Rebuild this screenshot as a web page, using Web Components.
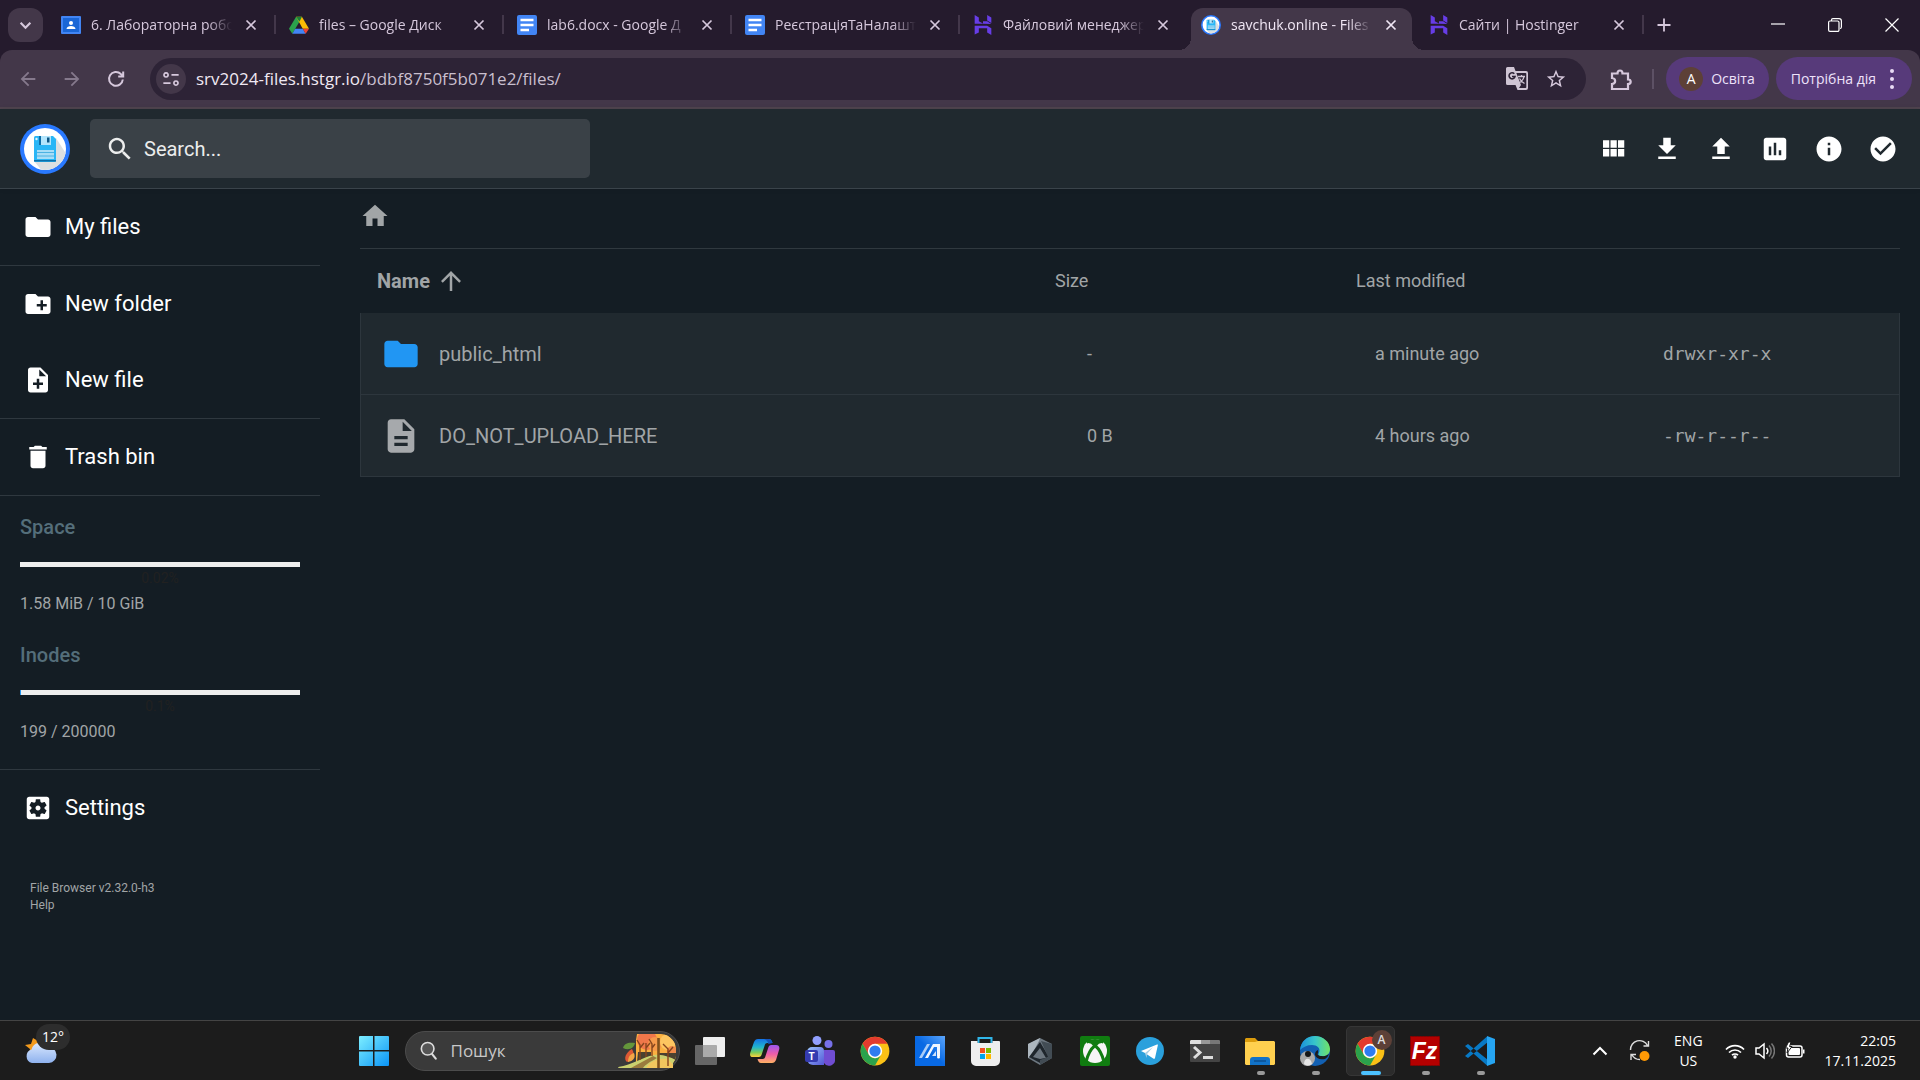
<!DOCTYPE html>
<html lang="uk">
<head>
<meta charset="utf-8">
<title>savchuk.online - Files</title>
<style>
  body {
    margin: 0;
    background: #141d24;
    --ui: "Open Sans", "Noto Sans", sans-serif;
    --app: Roboto, "Liberation Sans", sans-serif;
  }
</style>
</head>
<body>
<app-desktop></app-desktop>

<script>
// Material icons, all on a 24x24 grid
const PATHS = {
  folder: "M10 4H4c-1.1 0-1.99.9-1.99 2L2 18c0 1.1.9 2 2 2h16c1.1 0 2-.9 2-2V8c0-1.1-.9-2-2-2h-8l-2-2z",
  newFolder: "M20 6h-8l-2-2H4c-1.11 0-1.99.89-1.99 2L2 18c0 1.11.89 2 2 2h16c1.11 0 2-.89 2-2V8c0-1.11-.89-2-2-2zm-1 8h-3v3h-2v-3h-3v-2h3V9h2v3h3v2z",
  newFile: "M14 2H6c-1.1 0-1.99.9-1.99 2L4 20c0 1.1.89 2 1.99 2H18c1.1 0 2-.9 2-2V8l-6-6zm2 14h-3v3h-2v-3H8v-2h3v-3h2v3h3v2zm-3-7V3.5L18.5 9H13z",
  trash: "M6 19c0 1.1.9 2 2 2h8c1.1 0 2-.9 2-2V7H6v12zM19 4h-3.5l-1-1h-5l-1 1H5v2h14V4z",
  settings: "M12 10c-1.1 0-2 .9-2 2s.9 2 2 2 2-.9 2-2-.9-2-2-2zm7-7H5c-1.11 0-2 .9-2 2v14c0 1.1.89 2 2 2h14c1.11 0 2-.9 2-2V5c0-1.1-.89-2-2-2zm-1.75 9c0 .23-.02.46-.05.68l1.48 1.16c.13.11.17.3.08.45l-1.4 2.42c-.09.15-.27.21-.43.15l-1.74-.7c-.36.28-.76.51-1.18.69l-.26 1.85c-.03.17-.18.3-.35.3h-2.8c-.17 0-.32-.13-.35-.29l-.26-1.85c-.43-.18-.82-.41-1.18-.69l-1.74.7c-.16.06-.34 0-.43-.15l-1.4-2.42c-.09-.15-.05-.34.08-.45l1.48-1.16c-.03-.23-.05-.46-.05-.69 0-.23.02-.46.05-.68l-1.48-1.16c-.13-.11-.17-.3-.08-.45l1.4-2.42c.09-.15.27-.21.43-.15l1.74.7c.36-.28.76-.51 1.18-.69l.26-1.85c.03-.17.18-.3.35-.3h2.8c.17 0 .32.13.35.29l.26 1.85c.43.18.82.41 1.18.69l1.74-.7c.16-.06.34 0 .43.15l1.4 2.42c.09.15.05.34-.08.45l-1.48 1.16c.03.23.05.46.05.69z",
  search: "M15.5 14h-.79l-.28-.27C15.41 12.59 16 11.11 16 9.5 16 5.91 13.09 3 9.5 3S3 5.91 3 9.5 5.91 16 9.5 16c1.61 0 3.09-.59 4.23-1.57l.27.28v.79l5 4.99L20.49 19l-4.99-5zm-6 0C7.01 14 5 11.99 5 9.5S7.01 5 9.5 5 14 7.01 14 9.5 11.99 14 9.5 14z",
  grid: "M4 11h5V5H4v6zm0 7h5v-6H4v6zm6 0h5v-6h-5v6zm6 0h5v-6h-5v6zm-6-7h5V5h-5v6zm6-6v6h5V5h-5z",
  download: "M19 9h-4V3H9v6H5l7 7 7-7zM5 18v2h14v-2H5z",
  upload: "M9 16h6v-6h4l-7-7-7 7h4zm-4 2h14v2H5z",
  chart: "M19 3H5c-1.1 0-2 .9-2 2v14c0 1.1.9 2 2 2h14c1.1 0 2-.9 2-2V5c0-1.1-.9-2-2-2zM9 17H7v-7h2v7zm4 0h-2V7h2v10zm4 0h-2v-4h2v4z",
  info: "M12 2C6.48 2 2 6.48 2 12s4.48 10 10 10 10-4.48 10-10S17.52 2 12 2zm1 15h-2v-6h2v6zm0-8h-2V7h2v2z",
  check: "M12 2C6.48 2 2 6.48 2 12s4.48 10 10 10 10-4.48 10-10S17.52 2 12 2zm-2 15l-5-5 1.41-1.41L10 14.17l7.59-7.59L19 8l-9 9z",
  home: "M10 20v-6h4v6h5v-8h3L12 3 2 12h3v8z",
  arrowUp: "M4 12l1.41 1.41L11 7.83V20h2V7.83l5.58 5.59L20 12l-8-8-8 8z",
  doc: "M14 2H6c-1.1 0-1.99.9-1.99 2L4 20c0 1.1.89 2 1.99 2H18c1.1 0 2-.9 2-2V8l-6-6zm2 16H8v-2h8v2zm0-4H8v-2h8v2zm-3-5V3.5L18.5 9H13z",
  star: "M22 9.24l-7.19-.62L12 2 9.19 8.63 2 9.24l5.46 4.73L5.82 21 12 17.27 18.18 21l-1.63-7.03L22 9.24zM12 15.4l-3.76 2.27 1-4.28-3.32-2.88 4.38-.38L12 6.1l1.71 4.04 4.38.38-3.32 2.88 1 4.28L12 15.4z",
  back: "M20 11H7.83l5.59-5.59L12 4l-8 8 8 8 1.41-1.41L7.83 13H20v-2z",
  forward: "M12 4l-1.41 1.41L16.17 11H4v2h12.17l-5.58 5.59L12 20l8-8z"
};

// Stroked line icons
const LINES = {
  close: ["0 0 12 12", 1.7, "M1.5 1.5l9 9M10.500 1.500l-9 9"],
  chevron: ["0 0 12 12", 2, "M1.500 3.500L6 8l4.500-4.500"],
  plus: ["0 0 14 14", 1.8, "M7 .5v13M.5 7h13"],
  min: ["0 0 14 14", 1.2, "M0 6h14"],
  restore: ["0 0 14 14", 1.2, "M3.500 2.500V2a1.400 1.400 0 0 1 1.400-1.400H11a2.400 2.400 0 0 1 2.400 2.400v6A1.500 1.500 0 0 1 12 10.500M2 3h7.500A1.400 1.400 0 0 1 11 4.400V12a1.400 1.400 0 0 1-1.400 1.400H2A1.400 1.400 0 0 1 .6 12V4.400A1.400 1.400 0 0 1 2 3z"],
  exit: ["0 0 14 14", 1.2, "M.5.5l13 13M13.500.5l-13 13"],
  reload: ["0 0 20 20", 2, "M16.800 10.500A6.900 6.900 0 1 1 14.800 5L17 7M17.200 2.500v5h-5"],
  tune: ["0 0 20 20", 1.9, "M4.500 3.200a2.300 2.300 0 1 0 .01 0M10.500 5.500h8M15.500 12.200a2.300 2.300 0 1 0 .01 0M1.500 14.500h8"],
  puzzle: ["0 0 24 24", 2.2, "M3 6.500h5.500c0-4 5-4 5 0H19v6c3.600 0 3.600 4.500 0 4.500v5H3v-5c4.200-.4 4.200-5.600 0-6z"],
  up: ["0 0 16 16", 2, "M1.500 11.500L8 5l6.500 6.500"]
};

const HOSTINGER = `<path fill="#673de6" d="M2 0v10.500l10.500.1L7 7.500V3zM17 0v6.500l5 3V3zM2 23.500V13l15-.1 5 3.100V24l-5-3v-5H7v5z"/><path fill="#673de6" d="M12 10.600l10 .1-5-3.200h-5z"/>`;

const CHROME = `
  <circle cx="24" cy="24" r="23" fill="#fbc116"/>
  <path fill="#e33b2e" d="M4.100 12.500A23 23 0 0 1 43.900 12.500H24L14 29.800z"/>
  <path fill="#2ba24c" d="M4.100 12.500A23 23 0 0 0 24 47l10-17.300A11.500 11.500 0 0 1 14 29.700z"/>
  <circle cx="24" cy="24" r="11.500" fill="#fff"/><circle cx="24" cy="24" r="9" fill="#2f7cf0"/>`;

const LOGO = `
  <circle cx="25" cy="25" r="25" fill="#2979ff"/><circle cx="25" cy="25" r="21" fill="#fff"/>
  <path fill="#dcdfe1" d="M36 14l9.600 15A21 21 0 0 1 21 45.600L14 37z"/>
  <path fill="#29b6f6" d="M14 13.500a1.500 1.500 0 0 1 1.500-1.500H33l3 3v21.500a1.500 1.500 0 0 1-1.500 1.500h-19a1.500 1.500 0 0 1-1.500-1.500z"/>
  <path fill="#0d6ea8" d="M19 12h2v9h-2zM14 36h22v1.500H14z"/><path fill="#b3e5fc" d="M21 12h10v9H21z"/>
  <path fill="#0b5686" d="M27 13.500h2.500v5H27z"/><path fill="#a7ddf7" d="M17 26h17v9H17z"/>
  <path stroke="#4cb2e2" d="M17 28.500h17M17 32h17"/><circle cx="16.500" cy="15" r="1.200" fill="#e1f5fe"/>`;

const GDOC = `<rect width="20" height="20" rx="2" fill="#4285f4"/><path stroke="#fff" stroke-width="2.400" d="M3.500 5h13M3.500 10h13M3.500 15h8.500"/>`;

// Full-colour art: [viewBox, markup]
const ART = {
  logo: ["0 0 50 50", LOGO],
  gdoc: ["0 0 20 20", GDOC],
  hostinger: ["0 0 24 24", HOSTINGER],
  chrome: ["0 0 48 48", CHROME],
  classroom: ["0 0 20 20", `<rect y="1" width="20" height="18" rx="1" fill="#4285f4"/><rect x="2" y="3" width="16" height="14" fill="#1a66d6"/><circle cx="10" cy="8" r="2" fill="#fff"/><path fill="#fff" d="M5.500 14c0-4 9-4 9 0z"/>`],
  drive: ["0 0 24 22", `<path fill="#2ba24c" d="M8.500 1L0 15.500 4 21.500 12.500 7z"/><path fill="#fbbc04" d="M8.500 1h7L24 15.500h-7.500z"/><path fill="#4285f4" d="M4 21.500h16l-3.500-6h-9z"/><path fill="#ea4335" d="M16.500 15.500H24l-4 6z"/><path fill="#188038" d="M8.500 1h7l-3 6z"/>`],
  translate: ["0 0 22 24", `<path fill="#cfc5d4" d="M1.500 0H8l1.500 4H20a2 2 0 0 1 2 2v15a2 2 0 0 1-2 2h-8.500l-2-5h-8A1.500 1.500 0 0 1 0 16.500v-15A1.500 1.500 0 0 1 1.500 0z"/><path fill="#2d2336" d="M10.300 6H19.500a.8.8 0 0 1 .8.800v13.400a.8.800 0 0 1-.8.800H13l2-3z"/><path stroke="#cfc5d4" stroke-width="1.300" fill="none" d="M12 9.500h7M15.500 8v1.500M18 9.500c-.5 3-2.500 5-5 6.500M13.500 11.500c1 2 2.500 3.500 5 5"/><path stroke="#2d2336" stroke-width="1.600" fill="none" d="M8.300 6.800a3 3 0 1 0 .7 2.700H6"/>`],
  dots: ["0 0 6 22", `<g fill="#e9dcf5"><circle cx="3" cy="3" r="2"/><circle cx="3" cy="11" r="2"/><circle cx="3" cy="19" r="2"/></g>`],
  start: ["0 0 30 30", `<linearGradient id="g" x2="1" y2="1" gradientUnits="objectBoundingBox"><stop stop-color="#7deeff"/><stop offset="1" stop-color="#0a94f7"/></linearGradient><path fill="url(#g)" d="M1 0h13v14H0V1a1 1 0 0 1 1-1zM15.500 0H29a1 1 0 0 1 1 1v13H15.500zM0 15.500h14V30H1a1 1 0 0 1-1-1zM15.500 15.500H30V29a1 1 0 0 1-1 1H15.500z"/>`],
  weather: ["0 0 32 28", `<path fill="#f39a1c" d="M0 9l6-1 2-6 5 3 6 0v10L4 18l1-5z"/><linearGradient id="g" x2="0" y2="1"><stop stop-color="#dbe9ff"/><stop offset="1" stop-color="#8fb2ee"/></linearGradient><path fill="url(#g)" d="M7 27a7 7 0 0 1-.5-13.500A9 9 0 0 1 23 11a8 8 0 0 1 1 16z"/>`],
  autumn: ["0 0 58 34", `
    <clipPath id="c"><path d="M0 34l7-13 10-9 2-12h24a16 16 0 0 1 15 17 16 16 0 0 1-3 12v5z"/></clipPath>
    <g clip-path="url(#c)"><path fill="#fbb040" d="M18 0h40v34H18z"/><circle cx="29" cy="6" r="10" fill="#f0774a"/><circle cx="37" cy="10" r="7" fill="#f79a4b"/><circle cx="50" cy="8" r="8" fill="#fdc560"/><circle cx="54" cy="17" r="5" fill="#f08a4a"/>
    <path fill="#4a4130" d="M20 18h13v6l-14 4zM41 19h17v7H41z"/>
    <path fill="#cad06f" d="M0 33c15-2 24-10 36-12 10-1 17 3 22 5v8H0z"/><path fill="#9a7b3d" d="M13 34c7-4 15-8 22-12l4 2c-7 4-11 6-14 10z"/><path fill="#f2c65e" d="M28 34c4-7 12-10 22-9l8 9z"/>
    <path stroke="#87451e" stroke-width="1.400" fill="none" d="M22 26V11l-3-5M22 14l4-5M28 23V9M28 14l4-5M34 22V10l-3-5M34 14l3-4M50 32V15l-5-5M50 19l5-6"/><path stroke="#80511c" stroke-width="2.600" d="M40.500 34V4"/></g>
    <path fill="#64963b" d="M5 14c1-5 6-6 12-5-1 5-6 8-12 5z"/><path fill="#de5934" d="M9 28c-4-3-1-10 5-13 3 5 2 11-5 13z"/><path fill="#f3a746" d="M10 28c0-5 2-8 6-9 2 5-1 8-6 9z"/>`],
  taskview: ["0 0 30 30", `<path fill="#eee" d="M9 1h20a1 1 0 0 1 1 1v18a1 1 0 0 1-1 1H8V2a1 1 0 0 1 1-1z"/><path fill="#666" d="M1 9h7v12h14v7a1 1 0 0 1-1 1H1a1 1 0 0 1-1-1V10a1 1 0 0 1 1-1z"/><path fill="#aaa" d="M8 9h13a1 1 0 0 1 1 1v11H8z"/>`],
  copilot: ["0 0 30 30", `<linearGradient id="a" x2="0" y2="1"><stop stop-color="#1473e6"/><stop offset=".45" stop-color="#20b5cf"/><stop offset=".75" stop-color="#7dcb59"/><stop offset="1" stop-color="#ffd03c"/></linearGradient><linearGradient id="b" x2="0" y2="1"><stop stop-color="#9b57f0"/><stop offset=".5" stop-color="#ee5ca8"/><stop offset="1" stop-color="#ffb163"/></linearGradient>
    <path fill="url(#a)" d="M8 3h11c2 0 3 2 3.500 4h-5c-2 0-2.500 1-3 3l-3 9c-1 2-2 2-4 2H3c-3 0-3.500-2-2.500-5L4 6c1-2 2-3 4-3z"/><path fill="url(#b)" d="M22 27H11c-2 0-3-2-3.500-4h5c2 0 2.500-1 3-3l3-9c1-2 2-2 4-2H26c3 0 4 2 3 5l-3 10c-1 2-2 3-4 3z"/><path fill="#1555bd" d="M14 3h5c2 0 3 2 3.500 4l-4 1c-1-3-2-4-4.500-5z"/>`],
  teams: ["0 0 30 30", `<linearGradient id="g" x2="1" y2="1"><stop stop-color="#9bc5ff"/><stop offset="1" stop-color="#5457d6"/></linearGradient><circle cx="12" cy="4.500" r="4.500" fill="#92a0ff"/><circle cx="23.500" cy="8" r="4" fill="#7770e9"/><path fill="#704dd2" d="M19 14h9a2 2 0 0 1 2 2v7a6 6 0 0 1-11 4z"/><path fill="url(#g)" d="M7 11h8a4 4 0 0 1 4 4v14H8a6 6 0 0 1-6-6v-7a5 5 0 0 1 5-5z"/><rect y="14" width="13" height="12" rx="2" fill="#353bb0"/><text x="6.500" y="23.500" text-anchor="middle" font-size="10" font-weight="700" fill="#fff">T</text>`],
  myasus: ["0 0 30 30", `<linearGradient id="g" y1="1" x2="1" y2="0"><stop offset=".5" stop-color="#0869e4"/><stop offset="1" stop-color="#5ba5fb"/></linearGradient><path fill="url(#g)" d="M0 0h30v30H0z"/><path fill="#a9cdf8" d="M4 22L12 8h3L7 22z"/><path fill="#f0f7ff" d="M10 22l8-14h7v12h-3v-9l-3 0-6 11z"/><path fill="#cfe3fb" d="M17 20l4-5v5z"/><circle cx="23.500" cy="21" r="1.500" fill="#fff"/>`],
  store: ["0 0 30 30", `<path fill="none" stroke="#30b6e9" stroke-width="2" d="M8.500 8V2h13v6"/><path fill="#eee" d="M1 5h6.500v2h15V5H29a1 1 0 0 1 1 1v19a5 5 0 0 1-5 5H6a5 5 0 0 1-5-5z"/><path fill="#f25022" d="M10 12h5v5h-5z"/><path fill="#7fba00" d="M16 12h5v5h-5z"/><path fill="#00a4ef" d="M10 18h5v5h-5z"/><path fill="#ffb900" d="M16 18h5v5h-5z"/>`],
  armoury: ["0 0 30 30", `<path fill="#6d7780" d="M15 2l12 6v14l-12 7L3 22V8z"/><path fill="#adb7bf" d="M15 2L3 8v14l3-2L14 5z"/><path fill="#1f262c" d="M15 6l9 15-3 1-6-10-7 9 7 2 5-1v2l-5 3-11-6z"/><path fill="#424c54" d="M27 8v14l-12 7v-5l8-3-7-16z"/>`],
  xbox: ["0 0 30 30", `<rect width="30" height="30" rx="2" fill="#107c10"/><circle cx="15" cy="15" r="12" fill="#f5f5f5"/><path fill="#107c10" d="M6 6c3-1 6 .5 9 3 3-2.500 6-4 9-3-2-2-5-3-9-3S8 4 6 6z"/><path fill="none" stroke="#107c10" stroke-width="3" d="M6 26C8 17 12 12 15 9.500 18 12 22 17 24 26M15 9.500C12 6 9 5 6.500 6M15 9.500C18 6 21 5 23.500 6"/>`],
  telegram: ["0 0 30 30", `<circle cx="15" cy="15" r="14" fill="#2aa0dc"/><path fill="#fff" d="M6 15l16-6.500c1-.3 1 .2.800 1L20 22c-.3 1-1 1-1.800.5L10 17z"/><path fill="#a9cfe3" d="M10 17l8-6-6 7-.5 4z"/>`],
  terminal: ["0 0 30 30", `<rect y="4" width="30" height="22" rx="1" fill="#444"/><path fill="#ddd" d="M1 4h10v4H0V5z"/><path fill="#999" d="M11 4h9v4h-9z"/><path fill="#777" d="M20 4h9l1 1v3H20z"/><path fill="none" stroke="#ddd" stroke-width="3" d="M4 11l6 5.500L4 22M13 21.500h10"/>`],
  explorer: ["0 0 30 30", `<path fill="#dc9c0c" d="M1 2h9l3 3h8v5H0V3z"/><path fill="#ffd04f" d="M0 6h10l3-1h16l1 1v22l-1 1H1l-1-1z"/><path fill="#1172c8" d="M5 29v-5a3 3 0 0 1 3-3h14a3 3 0 0 1 3 3v5z"/><path stroke="#0b4f91" stroke-width="1.500" d="M9 25h12"/>`],
  edge: ["0 0 30 30", `<linearGradient id="g" x2="1"><stop stop-color="#1b91dc"/><stop offset=".5" stop-color="#37c6ca"/><stop offset="1" stop-color="#71e366"/></linearGradient><circle cx="15" cy="15" r="15" fill="#1260b2"/><path fill="url(#g)" d="M0 14C1 5 7 0 15 0s15 6 15 13c0 5-4 8-9 7-3-.5-3-2-2-3 2-5-2-8-7-8S3 11 0 14z"/><path fill="#1c1c1c" d="M18 17c-1 1 0 3 3 3 4 .5 6-.5 8-2-1 2-2 4-4 5-6 1-9-1-10-4 0-3 1-4 3-5z"/><circle cx="7.500" cy="22.500" r="7.500" fill="#aaa"/><circle cx="8" cy="18" r="3" fill="#161616"/><path fill="#e5e5e5" d="M4 28c0-7 7-7 8 0-3 2-5 2-8 0z"/>`],
  filezilla: ["0 0 30 30", `<rect x=".5" y=".5" width="29" height="29" fill="#b40000" stroke="#8b0000" stroke-dasharray="2 1"/><text x="14.500" y="23" text-anchor="middle" font-size="23" font-weight="700" font-style="italic" fill="#fff">Fz</text>`],
  vscode: ["0 0 30 30", `<path fill="#0879c5" d="M0 10l3-2 20 16-1 5.500zM0 20l3 2L23 6 22 .5z"/><path fill="#26a5f2" d="M22 0l8 3v24l-8 3z"/>`],
  sync: ["0 0 22 24", `<path fill="none" stroke="#ddd" stroke-width="1.400" d="M1.500 11a9 9 0 0 1 17-4.500M19.500 2v5h-5M11 20.500A9 9 0 0 1 3 16M2 21v-5.500h5"/><circle cx="15.500" cy="17" r="5" fill="#ff9a05"/>`],
  wifi: ["0 0 20 16", `<path fill="none" stroke="#fff" stroke-width="1.700" d="M1 6.500a12.600 12.600 0 0 1 18 0M4 9.500a8.500 8.500 0 0 1 12 0M7 12.200a4.300 4.300 0 0 1 6 0"/><circle cx="10" cy="14" r="1.700" fill="#fff"/>`],
  volume: ["0 0 20 18", `<path fill="none" stroke="#fff" stroke-width="1.500" d="M1 6h3l5-4v14l-5-4H1zM11.500 6a4.500 4.500 0 0 1 0 6"/><path fill="none" stroke="#777" stroke-width="1.500" d="M14 3.500a8 8 0 0 1 0 11M16.500 1.500a11 11 0 0 1 0 15"/>`],
  battery: ["0 0 20 18", `<rect x="1.500" y="4" width="15.500" height="11" rx="2" fill="none" stroke="#fff" stroke-width="1.500"/><rect x="3.500" y="6" width="11.500" height="7" rx="1" fill="#fff"/><path fill="#fff" d="M18 7.500h1.500v4H18z"/><path fill="#fff" stroke="#1c1c1c" d="M3.500 0L.5 6h2.500l-1 5L7 4.500H4.500L6 0z"/>`],
  taskSearch: ["0 0 20 22", `<circle cx="8.500" cy="8.500" r="7" fill="#555" stroke="#ddd" stroke-width="1.800"/><path stroke="#ddd" stroke-width="2.400" stroke-linecap="round" d="M13.500 14.500l4 5"/>`]
};

function render(host, html) {
  const template = document.createElement("template");
  template.innerHTML = html;
  host.attachShadow({ mode: "open" }).appendChild(template.content.cloneNode(true));
}

class UiIcon extends HTMLElement {
  connectedCallback() {
    if (this.shadowRoot) return;
    const name = this.getAttribute("name");
    const w = this.getAttribute("size") || 24;
    const h = this.getAttribute("height") || w;
    let box = "0 0 24 24", body, attrs = 'fill="currentColor"';

    if (PATHS[name]) {
      body = `<path d="${PATHS[name]}"/>`;
    } else if (LINES[name]) {
      box = LINES[name][0];
      attrs = `fill="none" stroke="currentColor" stroke-width="${LINES[name][1]}"`;
      body = `<path d="${LINES[name][2]}"/>`;
    } else {
      [box, body] = ART[name];
      attrs = "";
    }
    render(this, `
      <style>
        :host { display: inline-flex; flex: none; }
        svg { display: block; font-family: "Liberation Sans", sans-serif; }
      </style>
      <svg width="${w}" height="${h}" viewBox="${box}" ${attrs} aria-hidden="true">${body}</svg>`);
  }
}
customElements.define("ui-icon", UiIcon);


class BrowserTab extends HTMLElement {
  constructor() {
    super();
    render(this, `
      <style>
        :host {
          display: block;
          flex: 0 1 228px;
          min-width: 0;
          box-sizing: border-box;
          padding: 8px 4px 0 3px;
          position: relative;
          color: #d6c8dc;
        }
        .tab {
          height: 42px;
          box-sizing: border-box;
          display: flex;
          align-items: center;
          padding: 0 13px 8px 10px;
          border-radius: 12px 12px 0 0;
        }
        .title {
          flex: 1;
          min-width: 0;
          margin: 0 11px 0 10px;
          overflow: hidden;
          white-space: nowrap;
          line-height: 24px;
          mask-image: linear-gradient(to right, #000 calc(100% - 24px), transparent);
        }
        button {
          all: unset;
          display: flex;
          padding: 2px;
        }
        /* divider on the right edge */
        :host::after {
          content: "";
          position: absolute;
          right: 0;
          top: 15px;
          width: 2px;
          height: 19px;
          background: #43374a;
        }
        :host([nodivider])::after, :host([active])::after { display: none; }
        :host([active]) { color: #f0e6f4; }
        :host([active]) .tab { background: #433749; position: relative; }
        :host([active]) .tab::before, :host([active]) .tab::after {
          content: "";
          position: absolute;
          bottom: 0;
          width: 12px;
          height: 12px;
        }
        :host([active]) .tab::before {
          left: -12px;
          background: radial-gradient(circle at 0 0, transparent 12px, #433749 12px);
        }
        :host([active]) .tab::after {
          right: -12px;
          background: radial-gradient(circle at 100% 0, transparent 12px, #433749 12px);
        }
      </style>
      <div class="tab">
        <slot name="icon"></slot>
        <span class="title"><slot></slot></span>
        <button aria-label="Закрити"><ui-icon name="close" size="12"></ui-icon></button>
      </div>`);
  }
}
customElements.define("browser-tab", BrowserTab);


class BrowserChrome extends HTMLElement {
  constructor() {
    super();
    render(this, `
      <style>
        :host {
          display: block;
          background: #251b2d;
          font: 14px/20px var(--ui);
          color: #d6c8dc;
        }
        button, a { all: unset; display: flex; align-items: center; justify-content: center; }
        .strip { display: flex; height: 50px; align-items: flex-start; }
        .tabsearch {
          width: 35px;
          height: 34px;
          margin: 8px 5px 0 8px;
          border-radius: 12px;
          background: #433749;
        }
        .tabs { display: flex; flex: 0 1 1596px; min-width: 0; }
        .new { width: 40px; height: 50px; }
        .window { display: flex; margin-left: auto; color: #fff; }
        .window button { width: 57px; height: 50px; }
        .bar {
          display: flex;
          align-items: center;
          height: 57px;
          background: #433749;
          border-radius: 12px 12px 0 0;
          border-bottom: 2px solid #50444f;
          padding: 0 8px 0 6px;
        }
        .nav { width: 44px; height: 40px; }
        .nav.off { color: #85798c; }
        .omnibox {
          flex: 1;
          display: flex;
          align-items: center;
          height: 42px;
          margin-left: 12px;
          border-radius: 21px;
          background: #2d2336;
          padding: 0 19px 0 6px;
        }
        .site { width: 30px; height: 30px; border-radius: 15px; background: #433749; }
        .url {
          flex: 1;
          margin-left: 10px;
          font-size: 17px;
          line-height: 24px;
          color: #c9bfce;
          outline: none;
        }
        .url b { font-weight: 400; color: #f0e9f3; }
        .omnibox > button + button { margin-left: 17px; }
        .ext { margin: 0 19px 0 23px; }
        .sep { width: 2px; height: 20px; background: #5d5165; }
        .pill {
          height: 43px;
          box-sizing: border-box;
          border-radius: 22px;
          background: #573a7a;
          color: #eee2fa;
        }
        .profile { margin: 0 7px 0 12px; padding: 0 14px 0 13px; }
        .avatar {
          width: 24px;
          line-height: 24px;
          border-radius: 12px;
          background: #5d4037;
          color: #fff;
          text-align: center;
          margin-right: 8px;
        }
        .action { padding: 0 17px 0 15px; }
        .action ui-icon { margin-left: 13px; }
      </style>
      <div class="strip">
        <button class="tabsearch" aria-label="Пошук вкладок"><ui-icon name="chevron" size="13"></ui-icon></button>
        <div class="tabs">
          <browser-tab><ui-icon slot="icon" name="classroom" size="20"></ui-icon>6. Лабораторна робо</browser-tab>
          <browser-tab><ui-icon slot="icon" name="drive" size="20"></ui-icon>files – Google Диск</browser-tab>
          <browser-tab><ui-icon slot="icon" name="gdoc" size="20"></ui-icon>lab6.docx - Google Д</browser-tab>
          <browser-tab><ui-icon slot="icon" name="gdoc" size="20"></ui-icon>РеєстраціяТаНалашт</browser-tab>
          <browser-tab nodivider><ui-icon slot="icon" name="hostinger" size="20"></ui-icon>Файловий менеджер</browser-tab>
          <browser-tab active><ui-icon slot="icon" name="logo" size="20"></ui-icon>savchuk.online - Files</browser-tab>
          <browser-tab><ui-icon slot="icon" name="hostinger" size="20"></ui-icon>Сайти | Hostinger</browser-tab>
        </div>
        <button class="new" aria-label="Нова вкладка"><ui-icon name="plus" size="14"></ui-icon></button>
        <div class="window">
          <button aria-label="Згорнути"><ui-icon name="min" size="14"></ui-icon></button>
          <button aria-label="Відновити"><ui-icon name="restore" size="14"></ui-icon></button>
          <button aria-label="Закрити вікно"><ui-icon name="exit" size="14"></ui-icon></button>
        </div>
      </div>
      <div class="bar">
        <button class="nav off" aria-label="Назад"><ui-icon name="back" size="22"></ui-icon></button>
        <button class="nav off" aria-label="Вперед"><ui-icon name="forward" size="22"></ui-icon></button>
        <button class="nav" aria-label="Оновити"><ui-icon name="reload" size="20"></ui-icon></button>
        <div class="omnibox">
          <button class="site" aria-label="Про сайт"><ui-icon name="tune" size="18"></ui-icon></button>
          <div class="url" role="textbox" aria-label="Адреса" contenteditable="true" spellcheck="false"><b>srv2024-files.hstgr.io</b>/bdbf8750f5b071e2/files/</div>
          <button aria-label="Перекласти"><ui-icon name="translate" size="22" height="24"></ui-icon></button>
          <button aria-label="Закладка"><ui-icon name="star" size="22"></ui-icon></button>
        </div>
        <button class="ext" aria-label="Розширення"><ui-icon name="puzzle" size="24"></ui-icon></button>
        <span class="sep"></span>
        <button class="pill profile"><span class="avatar">A</span>Освіта</button>
        <button class="pill action">Потрібна дія<ui-icon name="dots" size="6" height="22"></ui-icon></button>
      </div>`);
  }
}
customElements.define("browser-chrome", BrowserChrome);


class FileHeader extends HTMLElement {
  constructor() {
    super();
    render(this, `
      <style>
        :host {
          display: flex;
          align-items: center;
          height: 79px;
          padding: 0 10px 0 20px;
          background: #20292f;
          border-bottom: 1px solid #3a434a;
          box-shadow: 0 0 5px rgba(0, 0, 0, .1);
          color: #fff;
        }
        label {
          display: flex;
          align-items: center;
          flex: 0 1 500px;
          box-sizing: border-box;
          height: 59px;
          margin: 0 auto 0 20px;
          padding: 0 15px;
          background: #3a4147;
          border-radius: 5px;
          color: #eceded;
        }
        input {
          all: unset;
          flex: 1;
          margin-left: 9px;
          font: 20px/24px var(--app);
        }
        input::placeholder { color: #eceded; opacity: 1; }
        button { all: unset; display: flex; padding: 12px; }
      </style>
      <ui-icon name="logo" size="50"></ui-icon>
      <label><ui-icon name="search" size="30"></ui-icon>
        <input type="text" aria-label="Search" placeholder="Search..."></label>
      <button aria-label="Switch view"><ui-icon name="grid" size="30"></ui-icon></button>
      <button aria-label="Download"><ui-icon name="download" size="30"></ui-icon></button>
      <button aria-label="Upload"><ui-icon name="upload" size="30"></ui-icon></button>
      <button aria-label="Usage"><ui-icon name="chart" size="30"></ui-icon></button>
      <button aria-label="Info"><ui-icon name="info" size="30"></ui-icon></button>
      <button aria-label="Select multiple"><ui-icon name="check" size="30"></ui-icon></button>`);
  }
}
customElements.define("file-header", FileHeader);


class UsageMeter extends HTMLElement {
  connectedCallback() {
    if (this.shadowRoot) return;
    const value = this.getAttribute("value");
    render(this, `
      <style>
        :host { display: block; font: 16px/24px var(--app); color: #a1a5a7; }
        .label { font-size: 20px; font-weight: 500; color: #546e7a; margin-bottom: 23px; }
        .track { height: 5px; background: #eee; }
        .fill { height: 5px; width: ${value}%; min-width: 0; background: #2196f3; }
        .pct { font-size: 14px; line-height: 20px; text-align: center; color: #212121; margin: 1px 0 4px; }
      </style>
      <div class="label">${this.getAttribute("label")}</div>
      <div class="track"><div class="fill"></div></div>
      <div class="pct">${value}%</div>
      <slot></slot>`);
  }
}
customElements.define("usage-meter", UsageMeter);


class FileSidebar extends HTMLElement {
  constructor() {
    super();
    render(this, `
      <style>
        :host { display: block; flex: 0 0 320px; color: #fff; }
        section { border-bottom: 1px solid #2f383f; }
        section:last-of-type { border: 0; }
        button {
          all: unset;
          display: flex;
          align-items: center;
          gap: 12px;
          height: 76px;
          padding-left: 23px;
          font: 22px/28px var(--app);
        }
        .usage { display: grid; gap: 27px; padding: 19px 20px 25px; }
        footer {
          margin: 34px 30px;
          font: 12px/17px var(--app);
          color: #a1a5a7;
        }
        a { display: block; color: inherit; text-decoration: none; }
      </style>
      <section><button><ui-icon name="folder" size="30"></ui-icon>My files</button></section>
      <section>
        <button><ui-icon name="newFolder" size="30"></ui-icon>New folder</button>
        <button><ui-icon name="newFile" size="30"></ui-icon>New file</button>
      </section>
      <section><button><ui-icon name="trash" size="30"></ui-icon>Trash bin</button></section>
      <section class="usage">
        <usage-meter label="Space" value="0.02">1.58 MiB / 10 GiB</usage-meter>
        <usage-meter label="Inodes" value="0.1">199 / 200000</usage-meter>
      </section>
      <section><button><ui-icon name="settings" size="30"></ui-icon>Settings</button></section>
      <footer>
        <a href="#">File Browser v2.32.0-h3</a>
        <a href="#">Help</a>
      </footer>`);
  }
}
customElements.define("file-sidebar", FileSidebar);


class FileListing extends HTMLElement {
  constructor() {
    super();
    this.files = [
      { icon: "folder", color: "#2196f3", name: "public_html", size: "-", modified: "a minute ago", perms: "drwxr-xr-x" },
      { icon: "doc", color: "#a6a9ac", name: "DO_NOT_UPLOAD_HERE", size: "0 B", modified: "4 hours ago", perms: "-rw-r--r--" }
    ];
    const rows = this.files.map((f) => `
      <tr>
        <td class="name"><div><ui-icon name="${f.icon}" size="40" style="color:${f.color}"></ui-icon>${f.name}</div></td>
        <td class="size">${f.size}</td>
        <td>${f.modified}</td>
        <td class="perms">${f.perms}</td>
      </tr>`).join("");

    render(this, `
      <style>
        :host {
          display: block;
          flex: 1;
          min-width: 0;
          padding: 0 20px 0 40px;
          font: 18px/24px var(--app);
          color: #a1a5a7;
        }
        .crumbs { padding: 12px 0 17px; border-bottom: 1px solid #30393f; }
        .crumbs a { display: inline-flex; vertical-align: top; color: inherit; }
        table { width: 100%; border-collapse: separate; border-spacing: 0; table-layout: fixed; }
        th { height: 64px; padding: 0; text-align: left; font-weight: 400; }
        th:first-child { padding-left: 17px; font-weight: 700; font-size: 20px; }
        th div, .name div { display: flex; align-items: center; }
        th ui-icon { margin-left: 6px; }
        td {
          height: 82px;
          box-sizing: border-box;
          padding: 0 0 0 19px;
          background: #20292f;
          border-bottom: 1px solid #2d363d;
        }
        td:first-child { border-left: 1px solid #2d363d; }
        td:last-child { border-right: 1px solid #2d363d; }
        td.name { padding-left: 20px; font-size: 20px; }
        .name ui-icon { margin-right: 18px; }
        td.size { padding-left: 32px; }
        .perms { font: 18px/24px "DejaVu Sans Mono", monospace; }
      </style>
      <div class="crumbs"><a href="#" aria-label="Home"><ui-icon name="home" size="30"></ui-icon></a></div>
      <table>
        <colgroup><col><col style="width:301px"><col style="width:288px"><col style="width:256px"></colgroup>
        <thead>
          <tr>
            <th><div>Name<ui-icon name="arrowUp" size="30"></ui-icon></div></th>
            <th>Size</th>
            <th>Last modified</th>
            <th></th>
          </tr>
        </thead>
        <tbody>${rows}</tbody>
      </table>`);
  }
}
customElements.define("file-listing", FileListing);


class TaskApp extends HTMLElement {
  connectedCallback() {
    if (this.shadowRoot) return;
    render(this, `
      <style>
        :host { display: block; position: relative; }
        button {
          all: unset;
          display: flex;
          align-items: center;
          justify-content: center;
          box-sizing: border-box;
          width: 49px;
          height: 50px;
          border-radius: 5px;
        }
        .dot {
          position: absolute;
          bottom: 1px;
          left: 21px;
          width: 8px;
          height: 4px;
          border-radius: 2px;
          background: #9a9a9a;
          display: none;
        }
        :host([running]) .dot { display: block; }
        :host([active]) button { background: #2b2b2b; border: 1px solid #363636; }
        :host([active]) .dot { background: #4cc2ff; left: 15px; width: 20px; }
        .badge {
          position: absolute;
          left: 26px;
          top: 4px;
          width: 20px;
          border-radius: 10px;
          background: #5d4037;
          color: #ddd;
          font: 600 12px/20px var(--ui);
          text-align: center;
        }
      </style>
      <button aria-label="${this.getAttribute("name")}"><ui-icon name="${this.getAttribute("name")}" size="30"></ui-icon></button>
      ${this.hasAttribute("badge") ? `<span class="badge">${this.getAttribute("badge")}</span>` : ""}
      <span class="dot"></span>`);
  }
}
customElements.define("task-app", TaskApp);


class WinTaskbar extends HTMLElement {
  constructor() {
    super();
    render(this, `
      <style>
        :host {
          display: grid;
          grid-template-columns: 1fr auto 1fr;
          align-items: center;
          height: 59px;
          background: #1c1c1c;
          border-top: 1px solid #444;
          font: 14px/20px var(--ui);
          color: #fff;
        }
        .weather { position: relative; width: 32px; margin-left: 25px; padding-top: 4px; }
        .temp {
          position: absolute;
          left: 11px;
          top: -8px;
          padding: 0 6px;
          border-radius: 13px;
          background: #2d2d2d;
          line-height: 26px;
        }
        /* the tray pushes the pinned apps left of the middle */
        .center { display: flex; align-items: center; gap: 6px; padding-right: 66px; }
        .center label {
          display: flex;
          align-items: center;
          box-sizing: border-box;
          width: 275px;
          height: 40px;
          border-radius: 20px;
          background: #3a3a3a;
          border: 1px solid #4c4c4c;
          padding: 0 3px 0 14px;
        }
        input {
          all: unset;
          flex: 1;
          min-width: 0;
          margin-left: 13px;
          font: 17px/24px var(--ui);
        }
        input::placeholder { color: #c8c8c8; opacity: 1; }
        .tray { display: flex; align-items: center; justify-content: flex-end; padding-right: 24px; }
        .tray button { all: unset; display: flex; }
        .tray button:first-child { margin-right: 21px; }
        .lang { text-align: center; margin: 0 22px 0 23px; }
        .net { display: flex; align-items: center; gap: 10px; margin-right: 20px; }
        .clock { text-align: right; }
      </style>
      <div class="weather"><ui-icon name="weather" size="32" height="28"></ui-icon><span class="temp">12°</span></div>
      <div class="center">
        <task-app name="start"></task-app>
        <label><ui-icon name="taskSearch" size="18" height="20"></ui-icon>
          <input type="text" aria-label="Пошук" placeholder="Пошук"><ui-icon name="autumn" size="58" height="34"></ui-icon></label>
        <task-app name="taskview"></task-app>
        <task-app name="copilot"></task-app>
        <task-app name="teams"></task-app>
        <task-app name="chrome"></task-app>
        <task-app name="myasus"></task-app>
        <task-app name="store"></task-app>
        <task-app name="armoury"></task-app>
        <task-app name="xbox"></task-app>
        <task-app name="telegram"></task-app>
        <task-app name="terminal"></task-app>
        <task-app name="explorer" running></task-app>
        <task-app name="edge" running></task-app>
        <task-app name="chrome" running active badge="A"></task-app>
        <task-app name="filezilla" running></task-app>
        <task-app name="vscode" running></task-app>
      </div>
      <div class="tray">
        <button aria-label="Приховані значки"><ui-icon name="up" size="16"></ui-icon></button>
        <button aria-label="Оновлення"><ui-icon name="sync" size="22" height="24"></ui-icon></button>
        <div class="lang">ENG<br>US</div>
        <div class="net">
          <ui-icon name="wifi" size="20" height="16"></ui-icon>
          <ui-icon name="volume" size="20" height="18"></ui-icon>
          <ui-icon name="battery" size="20" height="18"></ui-icon>
        </div>
        <div class="clock">22:05<br>17.11.2025</div>
      </div>`);
  }
}
customElements.define("win-taskbar", WinTaskbar);


class AppDesktop extends HTMLElement {
  constructor() {
    super();
    render(this, `
      <style>
        :host { display: flex; flex-direction: column; min-height: 100vh; }
        main { flex: 1; display: flex; }
      </style>
      <browser-chrome></browser-chrome>
      <file-header></file-header>
      <main>
        <file-sidebar></file-sidebar>
        <file-listing></file-listing>
      </main>
      <win-taskbar></win-taskbar>`);
  }
}
customElements.define("app-desktop", AppDesktop);
</script>
</body>
</html>
